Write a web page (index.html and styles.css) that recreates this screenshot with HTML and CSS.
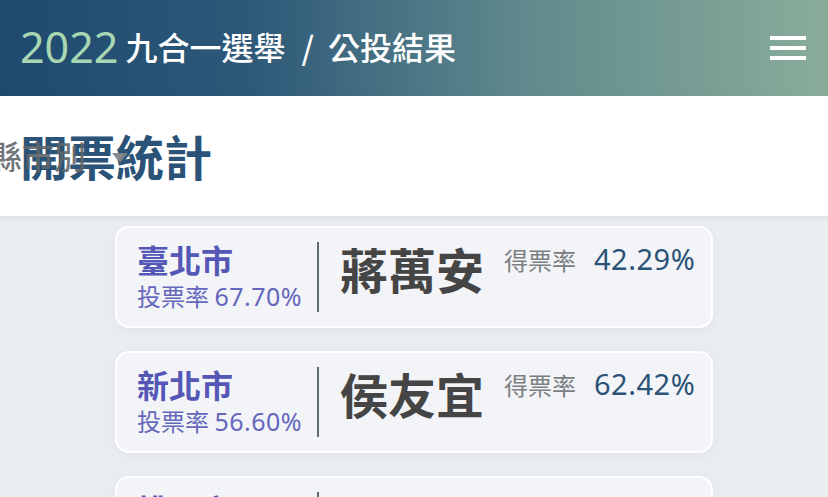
FILE: index.html
```html
<!DOCTYPE html>
<html lang="zh-Hant">
<head>
    <meta charset="UTF-8">
    <meta name="viewport" content="width=device-width, initial-scale=1.0">
    <title>2022 九合一選舉 / 公投結果</title>
    <link rel="stylesheet" href="styles.css">
</head>
<body>
    <header class="topbar">
        <div class="brand"><span class="year">2022</span> 九合一選舉<span class="slash">/</span>公投結果</div>
        <button class="menu" aria-label="menu">
            <span></span><span></span><span></span>
        </button>
    </header>

    <section class="subhead">
        <h1>開票統計</h1>
        <div class="picker">縣市別<span class="caret"></span></div>
    </section>

    <main class="list">
        <div class="card">
            <div class="area">
                <div class="city">臺北市</div>
                <div class="turnout">投票率 <span class="num">67.70%</span></div>
            </div>
            <div class="divider"></div>
            <div class="winner">蔣萬安</div>
            <div class="share"><span class="label">得票率</span><span class="value">42.29%</span></div>
        </div>
        <div class="card">
            <div class="area">
                <div class="city">新北市</div>
                <div class="turnout">投票率 <span class="num">56.60%</span></div>
            </div>
            <div class="divider"></div>
            <div class="winner">侯友宜</div>
            <div class="share"><span class="label">得票率</span><span class="value">62.42%</span></div>
        </div>
        <div class="card">
            <div class="area">
                <div class="city">桃園市</div>
                <div class="turnout">投票率 <span class="num">56.17%</span></div>
            </div>
            <div class="divider"></div>
            <div class="winner">張善政</div>
            <div class="share"><span class="label">得票率</span><span class="value">52.03%</span></div>
        </div>
    </main>
</body>
</html>
```

FILE: styles.css
```css
body {
    margin: 0;
    background: #eaedf0;
    font-family: "Noto Sans", "Noto Sans CJK TC", sans-serif;
}
.topbar {
    height: 96px;
    padding: 0 20px;
    display: flex;
    align-items: center;
    justify-content: space-between;
    background: linear-gradient(90deg, #1e4a6f 0%, #2d5878 30%, #5e888c 62%, #8aad9a 100%);
}
.brand {
    color: #fff;
    font-family: "Noto Sans CJK TC", sans-serif;
    font-size: 32px;
    font-weight: 500;
    line-height: 40px;
    margin-top: -4px;
}
.year {
    font-family: "Noto Sans", sans-serif;
    font-size: 43px;
    font-weight: 400;
    color: #a9d6b2;
    vertical-align: -3px;
}
.slash {
    margin: 0 14px 0 16px;
}
.menu {
    width: 36px;
    padding: 0;
    margin-right: 2px;
    border: none;
    background: none;
    display: flex;
    flex-direction: column;
    gap: 6px;
    cursor: pointer;
}
.menu span {
    height: 4px;
    background: #fff;
}
.subhead {
    position: relative;
    height: 120px;
    padding: 0 20px;
    display: flex;
    align-items: center;
    background: #fff;
    box-shadow: 0 2px 6px rgba(0,0,0,0.06);
}
.subhead h1 {
    margin: 0;
    font-family: "Noto Sans CJK TC", sans-serif;
    font-size: 48px;
    font-weight: 700;
    line-height: 48px;
    color: #2b5377;
    margin-top: -2px;
}
.picker {
    position: absolute;
    left: -10px;
    top: 50%;
    transform: translateY(-52%);
    display: flex;
    align-items: center;
    gap: 26px;
    font-family: "Noto Sans CJK TC", sans-serif;
    font-size: 32px;
    font-weight: 500;
    color: #5f6669;
    opacity: 0.9;
}
.caret {
    width: 0;
    height: 0;
    border-left: 8px solid transparent;
    border-right: 8px solid transparent;
    border-top: 10px solid #7c8184;
    margin-top: 6px;
}
.list {
    width: 598px;
    margin: 10px auto 0;
    display: flex;
    flex-direction: column;
    gap: 23px;
}
.card {
    display: flex;
    align-items: flex-start;
    padding: 14px 8px 14px 20px;
    background: #f2f4f7;
    border: 2px solid #fff;
    border-radius: 14px;
    box-shadow: 0 2px 8px rgba(0,0,0,0.04);
    font-family: "Noto Sans CJK TC", sans-serif;
    white-space: nowrap;
}
.card > * {
    flex-shrink: 0;
}
.area {
    width: 168px;
    color: #5557b6;
}
.city {
    font-size: 32px;
    font-weight: 700;
    line-height: 34px;
}
.turnout {
    margin-top: 5px;
    font-size: 24px;
    line-height: 30px;
    color: #6567bd;
}
.num, .value {
    font-family: "Noto Sans", "Noto Sans CJK TC", sans-serif;
    letter-spacing: 0.5px;
}
.num {
    font-size: 25px;
}
.divider {
    width: 2px;
    height: 70px;
    margin: 0 21px 0 12px;
    background: #5c6a6c;
}
.winner {
    font-size: 48px;
    font-weight: 700;
    line-height: 52px;
    color: #454545;
}
.share {
    margin-left: 20px;
    display: flex;
    align-items: baseline;
    gap: 18px;
    line-height: 34px;
}
.label {
    font-size: 24px;
    color: #7b7f82;
}
.value {
    font-size: 29px;
    color: #2b5377;
}
```
